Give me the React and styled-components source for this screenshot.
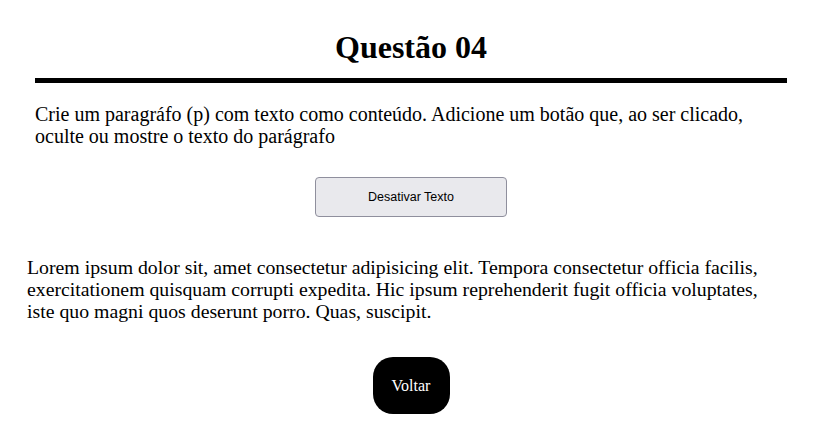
import React, { useState } from "react"
import styled, { createGlobalStyle } from "styled-components"

const Global = createGlobalStyle`
  body {
    margin: 8px;
    font-family: "Liberation Serif", "Times New Roman", serif;
    background: #fff;
    color: #000;
  }
`

const Main = styled.main`
  display: flex;
  flex-direction: column;
  align-items: center;
`

const Header = styled.header`
  width: 752px;
  border-bottom: 5px solid #000;
  text-align: center;
`

const Titre = styled.h1`
  font-size: 32px;
  font-weight: bold;
  margin: 21px 0 12px;
`

const Enunciado = styled.p`
  width: 752px;
  font-size: 20px;
  line-height: 22px;
  margin: 20px 0 30px;
`

const ToggleButton = styled.button`
  width: 192px;
  height: 40px;
  background: #e9e9ed;
  border: 1px solid #8f8f9d;
  border-radius: 4px;
  font-family: "Liberation Sans", Tahoma, sans-serif;
  font-size: 12.5px;
  color: #000;
  cursor: pointer;
`

const Texto = styled.p`
  align-self: stretch;
  margin: 39px 36px 35px 19px;
  font-size: 19.8px;
  line-height: 22px;
  visibility: ${props => (props.hidden ? "hidden" : "visible")};
`

const Voltar = styled.a`
  display: flex;
  align-items: center;
  justify-content: center;
  width: 77px;
  height: 57px;
  background: #000;
  color: #fff;
  border-radius: 20px;
  font-size: 16px;
  text-decoration: none;
`

export default function App() {
  const [visivel, setVisivel] = useState(true)
  return (
    <>
      <Global />
      <Main>
        <Header>
          <Titre>Questão 04</Titre>
        </Header>
        <Enunciado>
          Crie um paragráfo (p) com texto como conteúdo. Adicione um botão que, ao ser clicado, oculte ou mostre o texto do parágrafo
        </Enunciado>
        <ToggleButton onClick={() => setVisivel(!visivel)}>
          {visivel ? "Desativar Texto" : "Ativar Texto"}
        </ToggleButton>
        <Texto hidden={!visivel}>
          Lorem ipsum dolor sit, amet consectetur adipisicing elit. Tempora consectetur officia facilis, exercitationem quisquam corrupti expedita. Hic ipsum reprehenderit fugit officia voluptates, iste quo magni quos deserunt porro. Quas, suscipit.
        </Texto>
        <Voltar href="#">Voltar</Voltar>
      </Main>
    </>
  )
}
